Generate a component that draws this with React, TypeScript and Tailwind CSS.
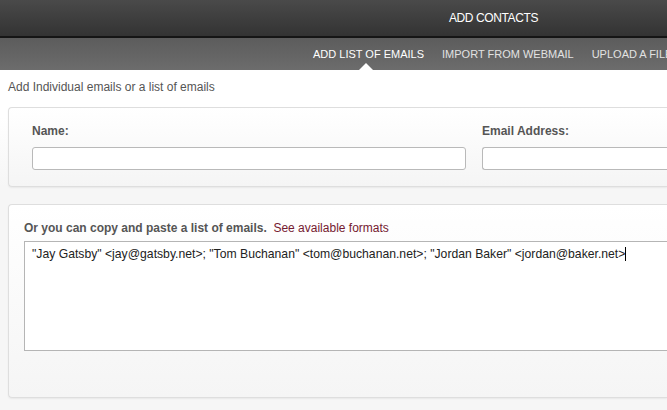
import React from 'react'

const tabs: { label: string; active?: boolean }[] = [
  { label: 'ADD LIST OF EMAILS', active: true },
  { label: 'IMPORT FROM WEBMAIL' },
  { label: 'UPLOAD A FILE' },
]

const emails =
  '"Jay Gatsby" <jay@gatsby.net>; "Tom Buchanan" <tom@buchanan.net>; "Jordan Baker" <jordan@baker.net>'

export default function App() {
  return (
    <div className="w-[667px] h-[410px] overflow-hidden bg-[#f6f6f6] font-['Liberation_Sans',Arial,sans-serif] text-[12px]">
      {/* header */}
      <div className="h-[36px] bg-gradient-to-b from-[#4a4a4a] to-[#333333] flex items-center pl-[449px] whitespace-nowrap">
        <span className="text-white text-[12px] tracking-[-0.4px]">ADD CONTACTS</span>
      </div>
      <div className="h-[2px] bg-[#151515]" />
      <div className="h-[32px] bg-gradient-to-b from-[#5c5c5c] to-[#6c6c6c] flex items-center pl-[313px] gap-[18px] whitespace-nowrap">
        {tabs.map(t => (
          <div key={t.label} className="relative h-full flex items-center">
            <span className={`text-[11px] ${t.active ? 'text-white' : 'text-[#e2e2e2]'}`}>{t.label}</span>
            {t.active && (
              <span className="absolute bottom-0 left-[46px] w-0 h-0 border-l-[7px] border-r-[7px] border-b-[7px] border-l-transparent border-r-transparent border-b-white" />
            )}
          </div>
        ))}
      </div>

      {/* body */}
      <div className="bg-gradient-to-b from-white from-40% to-[#f6f6f6] pt-[10px] pl-[8px]">
        <p className="text-[#555] leading-[14px] mb-[13px]">Add Individual emails or a list of emails</p>

        <div className="rounded-l-[4px] border border-r-0 border-[#dedede] bg-gradient-to-b from-white to-[#f5f5f5] shadow-[0_1px_2px_rgba(0,0,0,0.06)] h-[80px] pl-[23px] pt-[16px] flex gap-[16px]">
          <div className="w-[434px] shrink-0">
            <div className="font-bold text-[#555] leading-[14px] mb-[9px]">Name:</div>
            <div className="h-[23px] rounded-[3px] border border-[#b9b9b9] bg-white" />
          </div>
          <div className="flex-1">
            <div className="font-bold text-[#555] leading-[14px] mb-[9px]">Email Address:</div>
            <div className="h-[23px] rounded-l-[3px] border border-r-0 border-[#b9b9b9] bg-white" />
          </div>
        </div>
      </div>

      <div className="pl-[8px] pt-[17px]">
        <div className="rounded-l-[4px] border border-r-0 border-[#dedede] bg-gradient-to-b from-white to-[#f5f5f5] shadow-[0_1px_2px_rgba(0,0,0,0.06)] h-[194px] pl-[15px] pt-[16px]">
          <div className="leading-[14px] mb-[6px] whitespace-nowrap">
            <span className="font-bold text-[#555]">Or you can copy and paste a list of emails.</span>
            <span className="text-[#751a30]">&nbsp; See available formats</span>
          </div>
          <div className="h-[110px] border border-r-0 border-[#b5b5b5] bg-white pl-[7px] pt-[5px] whitespace-nowrap text-[#222] text-[12.2px] leading-[15px]">
            {emails}
            <span className="inline-block w-px h-[14px] bg-black align-[-3px]" />
          </div>
        </div>
      </div>
    </div>
  )
}
